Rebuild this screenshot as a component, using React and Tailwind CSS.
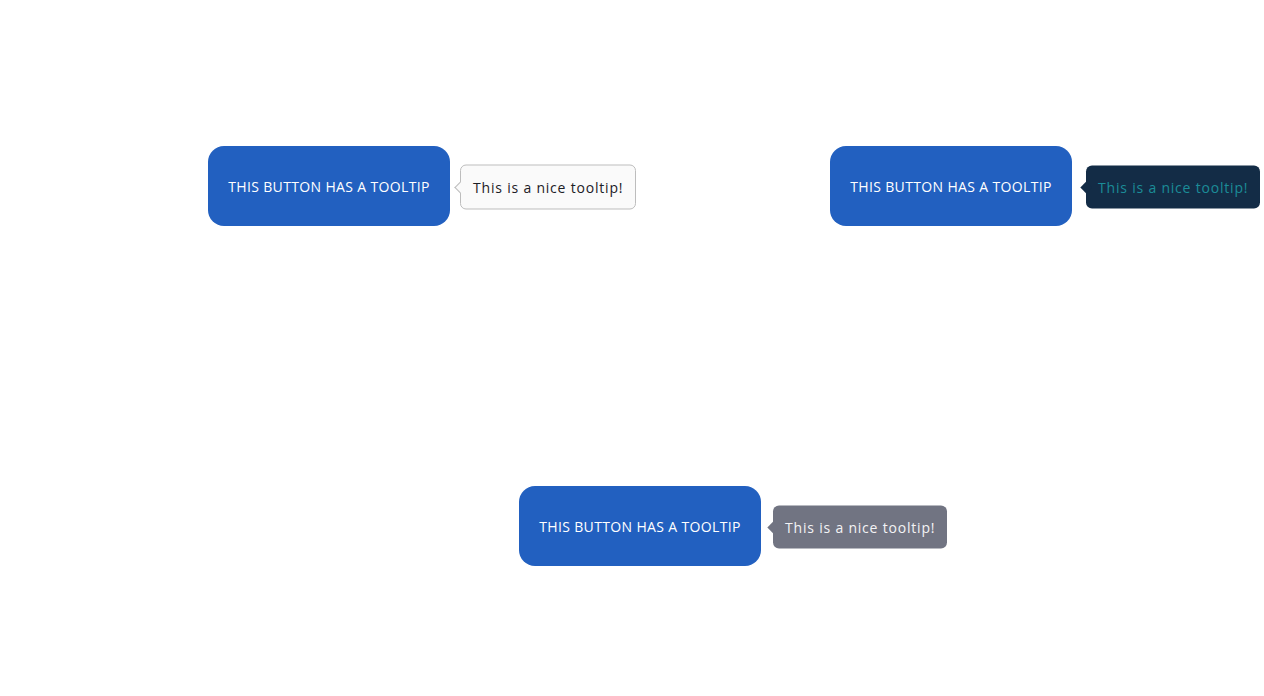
import React from 'react';

const tooltipStyles = {
  light: {
    box: 'left-[10px] border border-[#bdbdbd] bg-[#fafafa] text-[#1c2026] px-[12px] py-[11px]',
    arrow: 'left-[-5px] border-l border-b border-[#bdbdbd] bg-[#fafafa]',
  },
  dark: {
    box: 'left-[14px] bg-[#132c46] text-[#1b8c98] px-[12px] py-[11px]',
    arrow: 'left-[-4px] bg-[#132c46]',
  },
  gray: {
    box: 'left-[12px] bg-[#717482] text-[#f3f3f5] px-[12px] py-[11px]',
    arrow: 'left-[-4px] bg-[#717482]',
  },
};

function TooltipButton({ variant }) {
  const t = tooltipStyles[variant];
  return (
    <div className="relative">
      <button
        type="button"
        className="w-[242px] h-[80px] rounded-[16px] bg-[#2260c0] text-white text-[14px] tracking-[0.35px] uppercase"
      >
        This button has a tooltip
      </button>
      <div className="absolute left-full top-1/2 -translate-y-1/2 mt-[1px]">
        <div
          className={`relative whitespace-nowrap rounded-[6px] text-[14px] leading-[21px] tracking-[0.8px] ${t.box}`}
        >
          <span
            className={`absolute top-1/2 w-[8px] h-[8px] -translate-y-1/2 rotate-45 ${t.arrow}`}
          />
          <span className="relative">This is a nice tooltip!</span>
        </div>
      </div>
    </div>
  );
}

export default function App() {
  return (
    <div
      className="w-[1264px] h-[696px] bg-white pt-[16px] pl-[18px] pr-[2px] grid grid-cols-2 grid-rows-[340px_340px]"
      style={{ fontFamily: '"Open Sans", sans-serif' }}
    >
      <div className="flex items-center justify-center">
        <TooltipButton variant="light" />
      </div>
      <div className="flex items-center justify-center">
        <TooltipButton variant="dark" />
      </div>
      <div className="col-span-2 flex items-center justify-center">
        <TooltipButton variant="gray" />
      </div>
    </div>
  );
}
